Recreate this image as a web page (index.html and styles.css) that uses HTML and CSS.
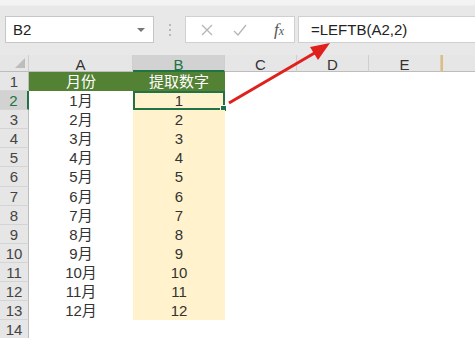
FILE: index.html
```html
<!DOCTYPE html>
<html lang="zh">

<head>
    <meta charset="UTF-8">
    <title>LEFTB</title>
    <link rel="stylesheet" href="styles.css">
</head>

<body>
    <div class="toolbar">
        <div class="namebox">
            <span>B2</span>
            <span class="caret"></span>
        </div>
        <div class="grip"><i></i><i></i><i></i></div>
        <div class="fbtns">
            <svg width="14" height="14" viewBox="0 0 14 14"><path d="M2 2L12 12M12 2L2 12" stroke="#b5b5b5" stroke-width="1.3" fill="none"/></svg>
            <svg width="16" height="14" viewBox="0 0 16 14"><path d="M2 8L6 12L14 2" stroke="#b5b5b5" stroke-width="1.3" fill="none"/></svg>
            <span class="fx"><i>f</i><i class="x">x</i></span>
        </div>
        <div class="formula">=LEFTB(A2,2)</div>
    </div>

    <div class="sheet">
        <div class="corner"><span></span></div>
        <div class="colhead">A</div>
        <div class="colhead active">B</div>
        <div class="colhead">C</div>
        <div class="colhead">D</div>
        <div class="colhead">E</div>
        <div class="colhead last"></div>

        <div class="rowhead">1</div>
        <div class="cell title">月份</div>
        <div class="cell title">提取数字</div>
        <div class="cell"></div><div class="cell"></div><div class="cell"></div><div class="cell"></div>

        <div class="rowhead active">2</div>
        <div class="cell">1月</div>
        <div class="cell num selected">1<span class="handle"></span></div>
        <div class="cell"></div><div class="cell"></div><div class="cell"></div><div class="cell"></div>

        <div class="rowhead">3</div>
        <div class="cell">2月</div>
        <div class="cell num">2</div>
        <div class="cell"></div><div class="cell"></div><div class="cell"></div><div class="cell"></div>

        <div class="rowhead">4</div>
        <div class="cell">3月</div>
        <div class="cell num">3</div>
        <div class="cell"></div><div class="cell"></div><div class="cell"></div><div class="cell"></div>

        <div class="rowhead">5</div>
        <div class="cell">4月</div>
        <div class="cell num">4</div>
        <div class="cell"></div><div class="cell"></div><div class="cell"></div><div class="cell"></div>

        <div class="rowhead">6</div>
        <div class="cell">5月</div>
        <div class="cell num">5</div>
        <div class="cell"></div><div class="cell"></div><div class="cell"></div><div class="cell"></div>

        <div class="rowhead">7</div>
        <div class="cell">6月</div>
        <div class="cell num">6</div>
        <div class="cell"></div><div class="cell"></div><div class="cell"></div><div class="cell"></div>

        <div class="rowhead">8</div>
        <div class="cell">7月</div>
        <div class="cell num">7</div>
        <div class="cell"></div><div class="cell"></div><div class="cell"></div><div class="cell"></div>

        <div class="rowhead">9</div>
        <div class="cell">8月</div>
        <div class="cell num">8</div>
        <div class="cell"></div><div class="cell"></div><div class="cell"></div><div class="cell"></div>

        <div class="rowhead">10</div>
        <div class="cell">9月</div>
        <div class="cell num">9</div>
        <div class="cell"></div><div class="cell"></div><div class="cell"></div><div class="cell"></div>

        <div class="rowhead">11</div>
        <div class="cell">10月</div>
        <div class="cell num">10</div>
        <div class="cell"></div><div class="cell"></div><div class="cell"></div><div class="cell"></div>

        <div class="rowhead">12</div>
        <div class="cell">11月</div>
        <div class="cell num">11</div>
        <div class="cell"></div><div class="cell"></div><div class="cell"></div><div class="cell"></div>

        <div class="rowhead">13</div>
        <div class="cell">12月</div>
        <div class="cell num">12</div>
        <div class="cell"></div><div class="cell"></div><div class="cell"></div><div class="cell"></div>

        <div class="rowhead">14</div>
        <div class="cell"></div><div class="cell"></div>
        <div class="cell"></div><div class="cell"></div><div class="cell"></div><div class="cell"></div>
    </div>

    <!-- red arrow pointing from B2 to the formula -->
    <svg class="arrow" width="475" height="338" viewBox="0 0 475 338">
        <line x1="229" y1="103" x2="318" y2="51" stroke="#e0201c" stroke-width="3"/>
        <polygon points="330,43 310,47 318,60" fill="#e0201c"/>
    </svg>
</body>

</html>
```

FILE: styles.css
```css
body {
    margin: 0;
    width: 475px;
    height: 338px;
    overflow: hidden;
    background-color: #fff;
    font-family: "Liberation Sans", "Noto Sans CJK SC", sans-serif;
    position: relative;
}

.toolbar {
    height: 55px;
    box-sizing: border-box;
    padding-top: 16px;
    display: flex;
    align-items: flex-start;
    background: linear-gradient(#f3f3f3 0, #f3f3f3 5px, #e8e8e8 6px, #e8e8e8 100%);
}

.namebox {
    margin-left: 5px;
    width: 149px;
    height: 27px;
    box-sizing: border-box;
    background-color: #fff;
    border: 1px solid #c6c6c6;
    display: flex;
    align-items: center;
    justify-content: space-between;
    padding: 0 8px 0 7px;
    font-size: 15px;
    color: #222;
}

.caret {
    width: 0;
    height: 0;
    border-left: 4px solid transparent;
    border-right: 4px solid transparent;
    border-top: 4px solid #777;
}

.grip {
    width: 31px;
    height: 27px;
    display: flex;
    flex-direction: column;
    align-items: center;
    justify-content: center;
    gap: 3px;
}

.grip i {
    width: 2px;
    height: 2px;
    background-color: #b8b8b8;
}

.fbtns {
    width: 110px;
    height: 27px;
    box-sizing: border-box;
    background-color: #fff;
    border: 1px solid #d0d0d0;
    display: flex;
    align-items: center;
    padding-left: 14px;
    gap: 18px;
}

.fx {
    margin-left: 8px;
    font-family: "Liberation Serif", serif;
    font-size: 17px;
    color: #555;
}

.fx .x {
    font-size: 12px;
}

.formula {
    margin-left: 3px;
    flex: 1;
    height: 27px;
    box-sizing: border-box;
    background-color: #fff;
    border: 1px solid #d0d0d0;
    border-right: none;
    padding-left: 12px;
    font-size: 15px;
    line-height: 25px;
    color: #222;
}

.sheet {
    display: grid;
    grid-template-columns: 29px 104px 92px 72px 72px 72px 1fr;
    grid-template-rows: 17px repeat(14, 19.1px);
}

.corner {
    background-color: #e6e6e6;
    border-right: 1px solid #cfcfcf;
    border-bottom: 1px solid #bdbdbd;
    position: relative;
}

.corner span {
    position: absolute;
    right: 3px;
    bottom: 3px;
    width: 0;
    height: 0;
    border-left: 10px solid transparent;
    border-bottom: 10px solid #bdbdbd;
}

.colhead {
    background-color: #e6e6e6;
    border-right: 1px solid #cfcfcf;
    border-bottom: 1px solid #bdbdbd;
    font-size: 15px;
    color: #333;
    text-align: center;
    line-height: 19px;
}

.colhead.active {
    background-color: #d2d2d2;
    border-bottom: 2px solid #217346;
    color: #217346;
}

.colhead.last {
    border-right: none;
    border-left: 2px solid #e0c070;
}

.rowhead {
    background-color: #e6e6e6;
    border-right: 1px solid #bdbdbd;
    border-bottom: 1px solid #d4d4d4;
    font-size: 15px;
    color: #444;
    text-align: center;
    line-height: 19px;
}

.rowhead.active {
    background-color: #d2d2d2;
    border-right: 2px solid #217346;
    color: #217346;
}

.cell {
    font-size: 15px;
    color: #333;
    text-align: center;
    line-height: 19px;
    position: relative;
}

.cell.title {
    background-color: #548235;
    color: #fff;
}

.cell.num {
    background-color: #fff2cc;
}

.cell.selected {
    box-sizing: border-box;
    border: 2px solid #217346;
    line-height: 15px;
}

.handle {
    position: absolute;
    right: -4px;
    bottom: -4px;
    width: 5px;
    height: 5px;
    background-color: #217346;
    border: 1px solid #fff;
}

.arrow {
    position: absolute;
    left: 0;
    top: 0;
}
```
